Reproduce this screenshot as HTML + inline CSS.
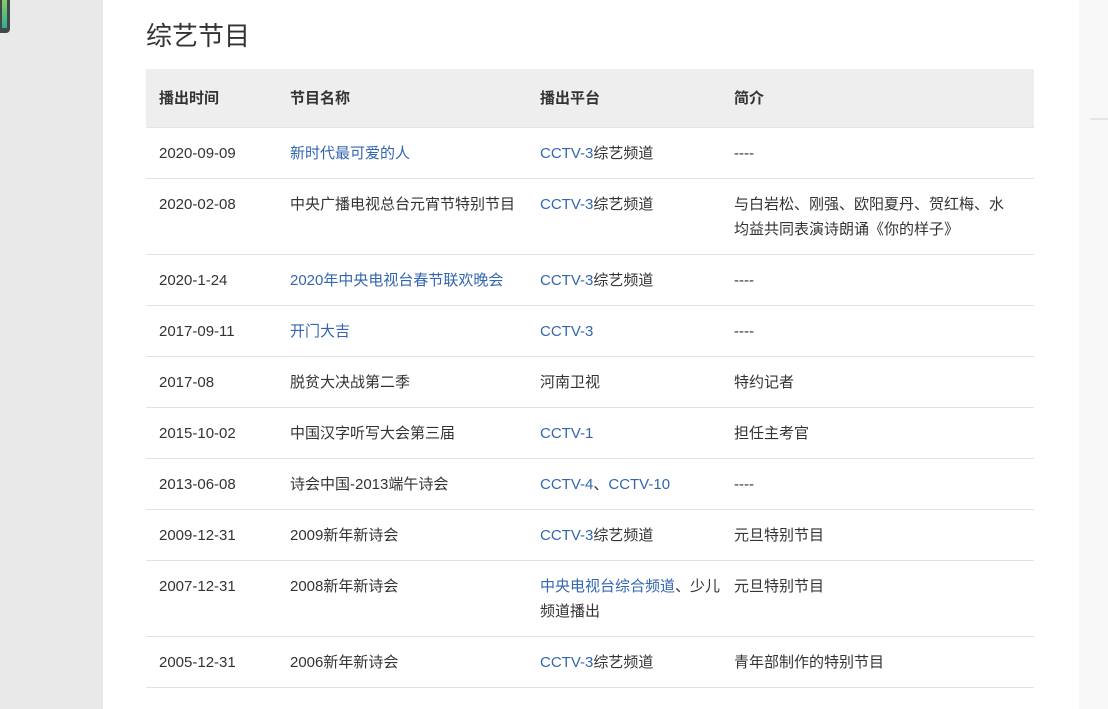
<!DOCTYPE html>
<html><head><meta charset="utf-8"><style>
html,body{margin:0;padding:0;width:1108px;height:709px;overflow:hidden;background:#e9e9e9;font-family:"Liberation Sans","Noto Sans CJK SC",sans-serif;color:#333}
.main{position:absolute;left:103px;top:0;width:976px;height:709px;background:#fff}
.right{position:absolute;left:1079px;top:0;width:29px;height:709px;background:#f8f8f8}
.right i{position:absolute;left:11px;top:118px;width:18px;height:2px;background:#e6e6e6}
.tag{position:absolute;left:0;top:0;width:10px;height:33px;background:#3d4a48;border-radius:0 0 4px 0}
.tag b{position:absolute;left:2px;top:0;width:5px;height:28px;background:linear-gradient(#8c6,#3a9)}
h2{position:absolute;left:146px;top:18px;margin:0;font-size:26px;font-weight:normal;color:#333;line-height:36px}
table{position:absolute;left:146px;top:69px;width:888px;border-collapse:collapse;font-size:15px;table-layout:fixed}
th{background:#eee;text-align:left;font-weight:bold;height:58px;padding:0 13px;box-sizing:border-box;border-bottom:1px solid #e4e4e4}
td{padding:13px 0 12px 13px;line-height:25px;vertical-align:top;border-bottom:1px solid #e2e2e2}
td:nth-child(4){padding-right:30px}
a{color:#3366b0;text-decoration:none}
</style></head><body>
<div class="tag"><b></b></div>
<div class="main"></div>
<div class="right"><i></i></div>
<h2>综艺节目</h2>
<table>
<colgroup><col style="width:131px"><col style="width:250px"><col style="width:194px"><col style="width:313px"></colgroup>
<tr><th>播出时间</th><th>节目名称</th><th>播出平台</th><th>简介</th></tr>
<tr><td>2020-09-09</td><td><a>新时代最可爱的人</a></td><td><a>CCTV-3</a>综艺频道</td><td>----</td></tr>
<tr><td>2020-02-08</td><td>中央广播电视总台元宵节特别节目</td><td><a>CCTV-3</a>综艺频道</td><td>与白岩松、刚强、欧阳夏丹、贺红梅、水均益共同表演诗朗诵《你的样子》</td></tr>
<tr><td>2020-1-24</td><td><a>2020年中央电视台春节联欢晚会</a></td><td><a>CCTV-3</a>综艺频道</td><td>----</td></tr>
<tr><td>2017-09-11</td><td><a>开门大吉</a></td><td><a>CCTV-3</a></td><td>----</td></tr>
<tr><td>2017-08</td><td>脱贫大决战第二季</td><td>河南卫视</td><td>特约记者</td></tr>
<tr><td>2015-10-02</td><td>中国汉字听写大会第三届</td><td><a>CCTV-1</a></td><td>担任主考官</td></tr>
<tr><td>2013-06-08</td><td>诗会中国-2013端午诗会</td><td><a>CCTV-4</a>、<a>CCTV-10</a></td><td>----</td></tr>
<tr><td>2009-12-31</td><td>2009新年新诗会</td><td><a>CCTV-3</a>综艺频道</td><td>元旦特别节目</td></tr>
<tr><td>2007-12-31</td><td>2008新年新诗会</td><td><a>中央电视台综合频道</a>、少儿频道播出</td><td>元旦特别节目</td></tr>
<tr><td>2005-12-31</td><td>2006新年新诗会</td><td><a>CCTV-3</a>综艺频道</td><td>青年部制作的特别节目</td></tr>
</table>
</body></html>
